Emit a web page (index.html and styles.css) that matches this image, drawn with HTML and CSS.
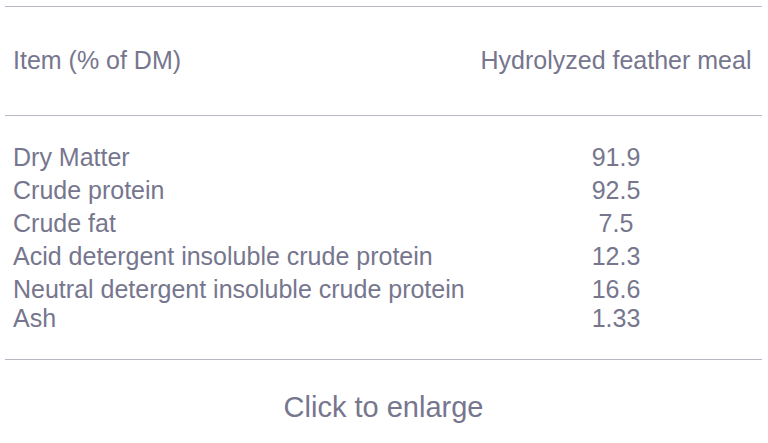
FILE: index.html
```html
<!DOCTYPE html>
<html>
<head>
<meta charset="utf-8">
<link rel="stylesheet" href="styles.css">
</head>
<body>
<div class="figure">
  <table class="data">
    <thead>
      <tr>
        <th class="col-item">Item (% of DM)</th>
        <th class="col-val">Hydrolyzed feather meal</th>
      </tr>
    </thead>
    <tbody>
      <tr class="first"><td class="col-item">Dry Matter</td><td class="col-val">91.9</td></tr>
      <tr><td class="col-item">Crude protein</td><td class="col-val">92.5</td></tr>
      <tr><td class="col-item">Crude fat</td><td class="col-val">7.5</td></tr>
      <tr><td class="col-item">Acid detergent insoluble crude protein</td><td class="col-val">12.3</td></tr>
      <tr><td class="col-item">Neutral detergent insoluble crude protein</td><td class="col-val">16.6</td></tr>
      <tr class="last"><td class="col-item">Ash</td><td class="col-val">1.33</td></tr>
    </tbody>
  </table>
  <div class="caption">Click to enlarge</div>
</div>
</body>
</html>
```
FILE: styles.css
```css
html, body {
  margin: 0;
  padding: 0;
  background: #ffffff;
}
body {
  font-family: "Liberation Sans", Arial, sans-serif;
  color: #76768e;
}
.figure {
  padding: 6px 6px 0 5px;
}
.data {
  width: 757px;
  border-collapse: collapse;
  font-size: 25px;
  table-layout: fixed;
}
.data th {
  font-weight: normal;
  line-height: 28px;
  padding: 39px 10px 41px 8px;
  border-top: 1px solid #b9b8c5;
  border-bottom: 1px solid #b9b8c5;
  white-space: nowrap;
}
.data td {
  line-height: 33px;
  padding: 0 10px 0 8px;
  white-space: nowrap;
}
.col-item {
  text-align: left;
  width: 449px;
}
.col-val {
  text-align: center;
}
.data tr.first td {
  padding-top: 25px;
}
.data tr.last td {
  line-height: 25px;
  padding-bottom: 28px;
  border-bottom: 1px solid #b9b8c5;
}
.caption {
  text-align: center;
  font-size: 29px;
  line-height: 32px;
  padding-top: 31px;
}
```
